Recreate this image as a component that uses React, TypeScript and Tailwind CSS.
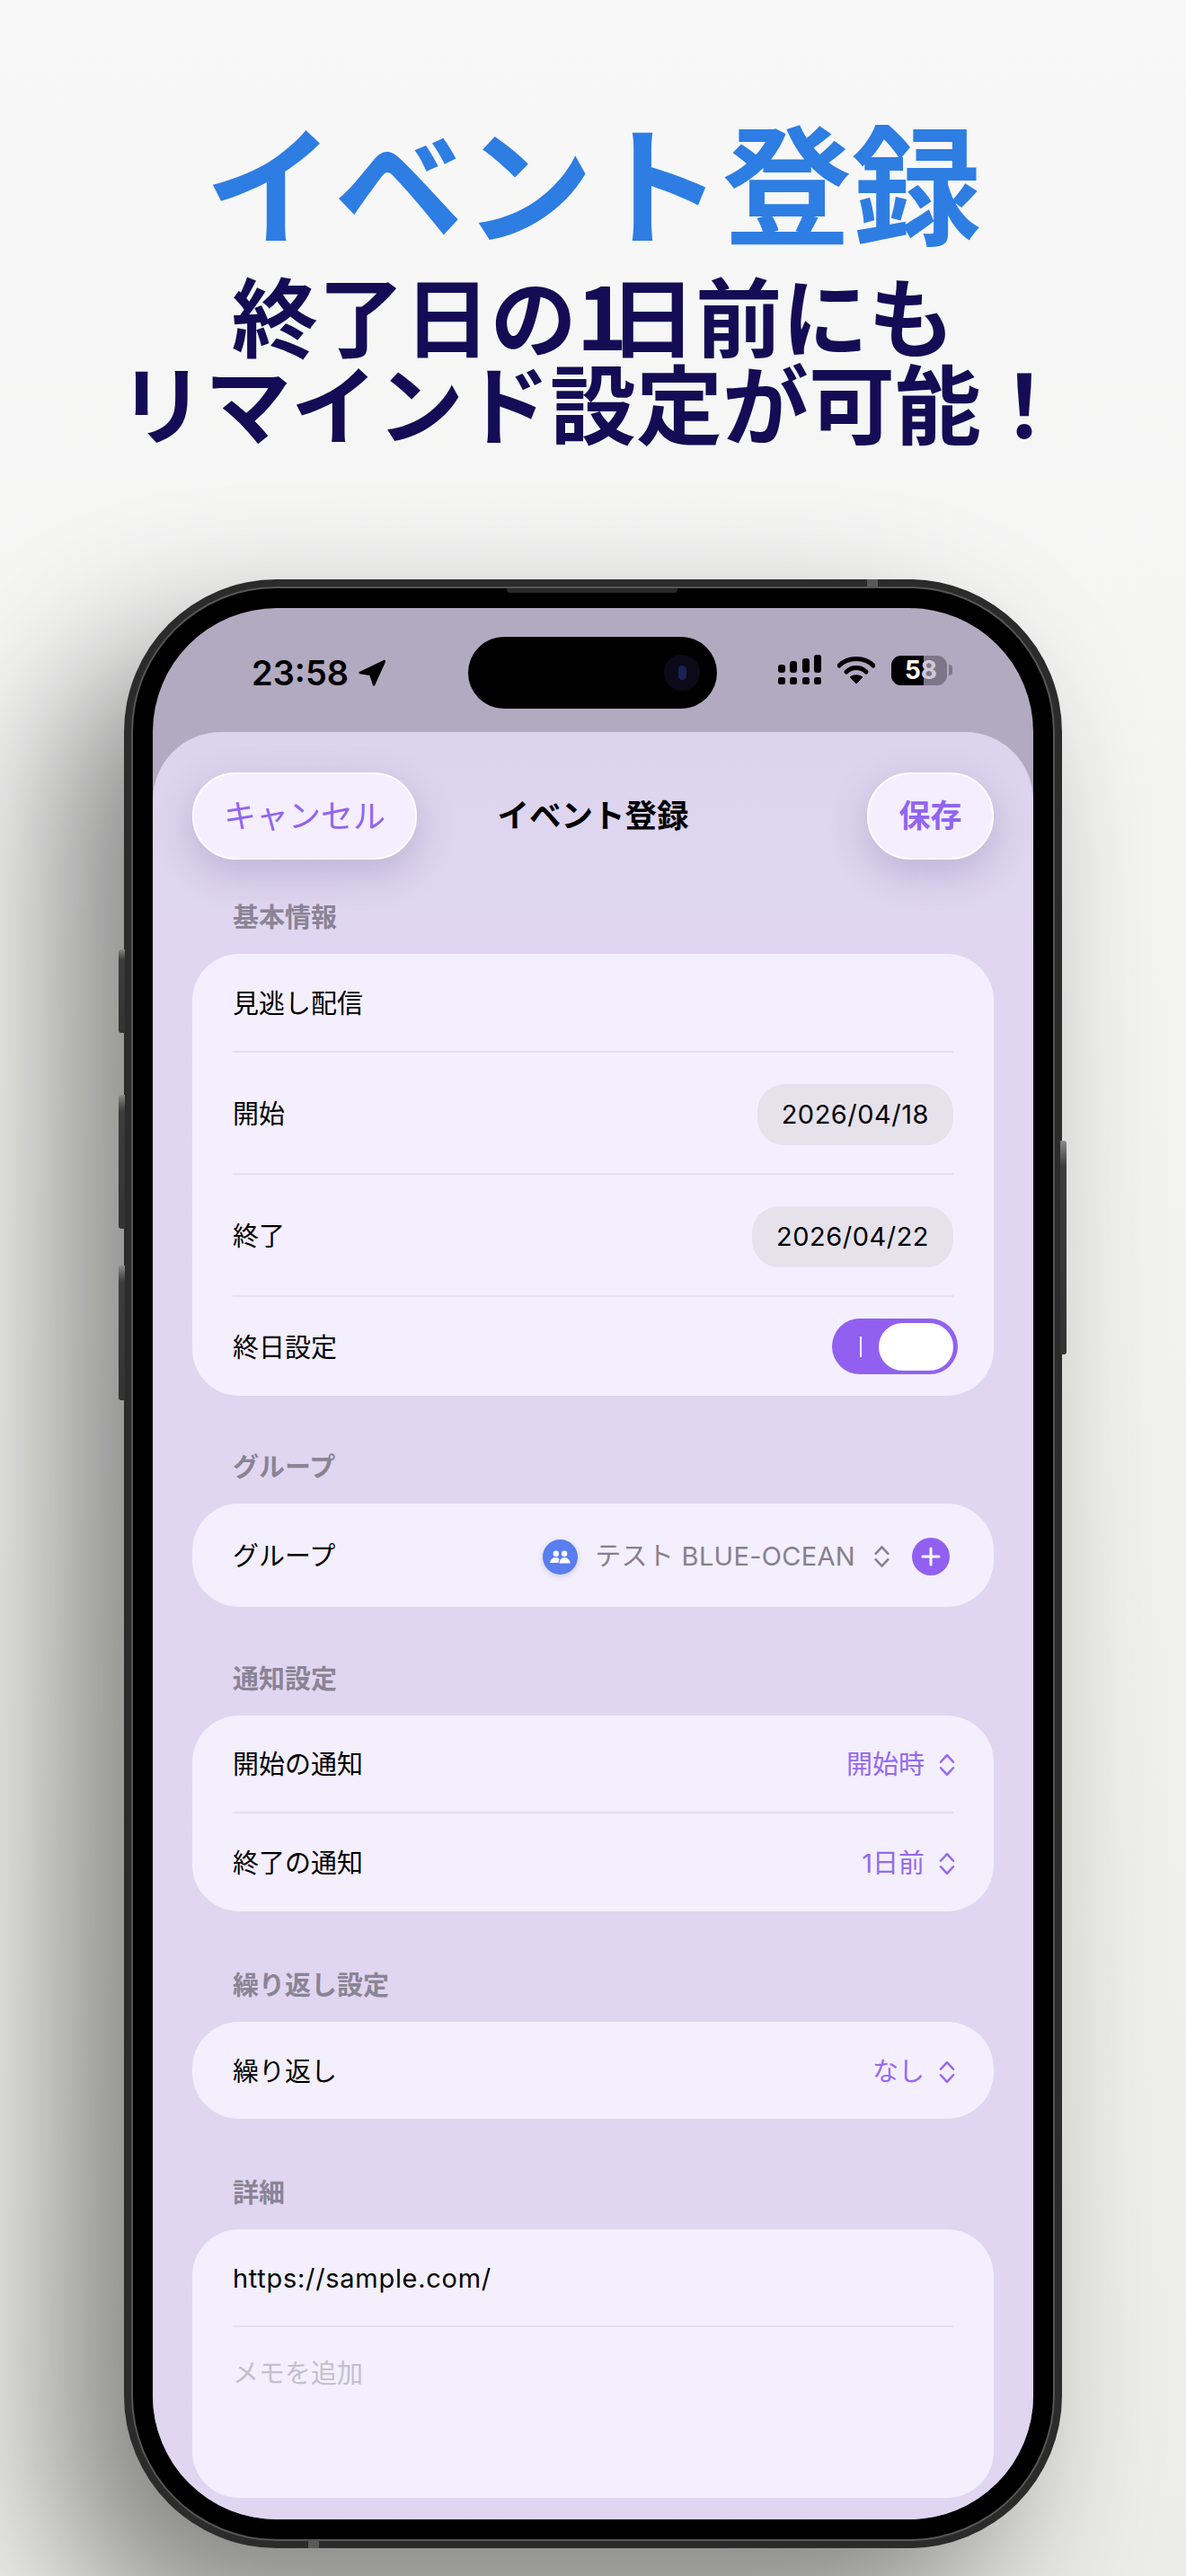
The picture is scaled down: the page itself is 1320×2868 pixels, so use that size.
import React from "react";

const font = "font-['Inter','Noto_Sans_CJK_JP',sans-serif]";

function Chevrons({ className }: { className: string }) {
  return (
    <svg viewBox="0 0 16 24" fill="none" stroke="currentColor" strokeWidth="2.3" strokeLinecap="round" strokeLinejoin="round" className={className}>
      <polyline points="1.500,9 8,2 14.500,9" />
      <polyline points="1.500,15 8,22 14.500,15" />
    </svg>
  );
}

function Label({ children }: { children: React.ReactNode }) {
  return <div className="h-10 mb-[22px] pl-[45px] pt-[3px] flex items-center text-[29px] font-bold text-[#8a8494]">{children}</div>;
}

function Divider() {
  return <div className="h-[2px] mx-[45px] bg-[#e4e0ec]" />;
}

function Row({ label, height, children }: { label: React.ReactNode; height: string; children?: React.ReactNode }) {
  return (
    <div className={`flex items-center justify-between px-[45px] pt-[3px] text-[29px] text-black ${height}`}>
      <span>{label}</span>
      {children}
    </div>
  );
}

function DatePill({ value }: { value: string }) {
  return <div className="h-[68px] px-[27px] flex items-center rounded-[30px] bg-[#e5e2ec] tracking-[0.5px]">{value}</div>;
}

function Picker({ value }: { value: string }) {
  return (
    <div className="flex items-center gap-[14px] -mr-[2px] text-[#9568f2]">
      <span className="mr-[2px]">{value}</span>
      <Chevrons className="w-[18px] h-[26px]" />
    </div>
  );
}

function StatusBar() {
  return (
    <div className="h-[138px] shrink-0 flex items-start justify-between pt-[52px] pl-[110px] pr-[90px] text-black">
      <div className="flex items-center gap-[10px] text-[38px] leading-10 font-semibold">
        23:58
        <svg viewBox="0 0 32 32" className="w-8 h-8" fill="currentColor">
          <path d="M29 2 2 15c-1 .6-.8 2 .4 2.2l11 1.8 3.6 11c.4 1.100 1.800 1.100 2.200 0L31 4c.5-1.300-.8-2.600-2-2Z" />
        </svg>
      </div>
      <div className="flex items-center gap-[18px]">
        <svg viewBox="0 0 48 34" className="w-12 h-[34px]" fill="currentColor">
          <rect x="0" y="25" width="8" height="8" rx="2.500" />
          <rect x="13" y="25" width="8" height="8" rx="2.500" />
          <rect x="27" y="25" width="8" height="8" rx="2.500" />
          <rect x="40" y="25" width="8" height="8" rx="2.500" />
          <rect x="0" y="11" width="8" height="9" rx="3" />
          <rect x="13" y="7" width="8" height="13" rx="3" />
          <rect x="27" y="4" width="8" height="16" rx="3" />
          <rect x="40" y="0" width="8" height="20" rx="3" />
        </svg>
        <svg viewBox="0 0 42 32" className="w-[42px] h-8">
          <path d="M2 11C12 1 30 1 40 11" fill="none" stroke="currentColor" strokeWidth="5" strokeLinecap="round" />
          <path d="M10 18c6-6 16-6 22 0" fill="none" stroke="currentColor" strokeWidth="5" strokeLinecap="round" />
          <path d="M21 31 14 24c4-3 10-3 14 0Z" fill="currentColor" stroke="currentColor" strokeLinejoin="round" />
        </svg>
        <div className="relative flex items-center">
          <div className="relative w-[62px] h-[33px] rounded-[11px] overflow-hidden bg-[#7d7689] flex">
            <div className="w-[36px] bg-black" />
            <div className="absolute inset-0 flex items-center justify-center pl-1 text-[28px] font-bold">
              <span className="text-white">5</span>
              <span className="text-[#cfcad8]">8</span>
            </div>
          </div>
          <div className="w-[4px] h-[12px] ml-[2px] rounded-r-full bg-[#7d7689]" />
        </div>
      </div>
    </div>
  );
}

function Sheet() {
  return (
    <div className={`flex-1 rounded-t-[76px] bg-gradient-to-b from-[#dcd4ee] to-[#e0d6f1] to-[12%] px-[44px] pt-[45px] ${font}`}>
      <div className="h-[97px] grid grid-cols-3 items-center">
        <div className="justify-self-start w-[250px] h-[97px] flex items-center justify-center rounded-[48px] bg-[#f5eefe] border-2 border-white text-[36px] text-[#9065f0] shadow-[0_14px_44px_rgba(70,50,110,0.22)]">
          キャンセル
        </div>
        <div className="justify-self-center text-[35.500px] font-semibold text-black whitespace-nowrap">イベント登録</div>
        <div className="justify-self-end w-[141px] h-[97px] flex items-center justify-center rounded-[48px] bg-[#f5eefe] border-2 border-white text-[35px] font-semibold text-[#9065f0] shadow-[0_14px_44px_rgba(70,50,110,0.22)]">
          保存
        </div>
      </div>

      <div className="mt-[43px]">
        <Label>基本情報</Label>
        <div className="rounded-[52px] bg-[#f4effe]">
          <Row label="見逃し配信" height="h-[108px]" />
          <Divider />
          <Row label="開始" height="h-[134px]">
            <DatePill value="2026/04/18" />
          </Row>
          <Divider />
          <Row label="終了" height="h-[134px]">
            <DatePill value="2026/04/22" />
          </Row>
          <Divider />
          <Row label="終日設定" height="h-[110px]">
            <div className="w-[140px] h-[62px] -mr-[5px] mb-[3px] p-[5px] pl-[31px] flex items-center justify-between rounded-full bg-[#9160f1]">
              <div className="w-[2px] h-[23px] bg-white" />
              <div className="w-[83px] h-[53px] rounded-full bg-white" />
            </div>
          </Row>
        </div>
      </div>

      <div className="mt-[58px]">
        <Label>グループ</Label>
        <Row label="グループ" height="h-[115px] rounded-[52px] bg-[#f3effd] !pr-[49px]">
          <div className="flex items-center text-[#85808e]">
            <div className="w-[39px] h-[39px] flex items-center justify-center rounded-full bg-[#5a7df0] shadow-[0_2px_6px_rgba(60,60,120,0.2)]">
              <svg viewBox="0 0 24 16" className="w-[23px] h-[15px]" fill="white">
                <circle cx="7" cy="4" r="3.400" />
                <circle cx="17" cy="4" r="3.400" />
                <path d="M0 15c0-3.500 3-6.500 6.500-6.500 2 0 3.600.8 4.700 2.200-.8 1-1.200 2.600-1.200 4.300Z" />
                <path d="M11 15.500c0-4 2.500-7 6-7s6.500 3 7 7Z" />
              </svg>
            </div>
            <span className="ml-[19px] tracking-[0.3px]">テスト BLUE-OCEAN</span>
            <Chevrons className="ml-[21px] w-[17px] h-[26px] text-[#85808e]" />
            <div className="ml-[25px] w-[42px] h-[42px] flex items-center justify-center rounded-full bg-[#9160f1]">
              <svg viewBox="0 0 22 22" className="w-[22px] h-[22px]" stroke="white" strokeWidth="3" strokeLinecap="round">
                <line x1="11" y1="2" x2="11" y2="20" />
                <line x1="2" y1="11" x2="20" y2="11" />
              </svg>
            </div>
          </div>
        </Row>
      </div>

      <div className="mt-[59px]">
        <Label>通知設定</Label>
        <div className="rounded-[52px] bg-[#f3effd]">
          <Row label="開始の通知" height="h-[107px]">
            <Picker value="開始時" />
          </Row>
          <Divider />
          <Row label="終了の通知" height="h-[109px]">
            <Picker value="1日前" />
          </Row>
        </div>
      </div>

      <div className="mt-[61px]">
        <Label>繰り返し設定</Label>
        <Row label="繰り返し" height="h-[108px] rounded-[52px] bg-[#f3effd]">
          <Picker value="なし" />
        </Row>
      </div>

      <div className="mt-[61px]">
        <Label>詳細</Label>
        <div className="h-[299px] rounded-[52px] bg-[#f3effd]">
          <Row label={<span className="tracking-[0.7px]">https://sample.com/</span>} height="h-[107px]" />
          <Divider />
          <div className="h-[104px] px-[45px] flex items-center text-[29px] text-[#c4bfcc]">メモを追加</div>
        </div>
      </div>
    </div>
  );
}

function SideButton({ className }: { className: string }) {
  return <div className={`absolute w-[7px] bg-gradient-to-b from-[#8a8a8a] via-[#3c3c3c] via-[12%] to-[#333333] ${className}`} />;
}

export default function App() {
  return (
    <div className="w-[1320px] h-[2868px] overflow-hidden flex flex-col items-center bg-gradient-to-b from-[#f8f8f8] to-[#ececea] font-['Noto_Sans_CJK_JP',sans-serif]">
      <h1 className="mt-[124px] text-[144px] leading-[150px] font-bold text-[#2d7de3]">イベント登録</h1>
      <div className="mt-[26px] text-center text-[96px] leading-[97px] font-bold text-[#150c55]">
        <div>
          終了日の<span className="tracking-[-20px]">1</span>日前にも
        </div>
        <div>リマインド設定が可能！</div>
      </div>

      <div className="relative mt-[151px] w-[1044px] h-[2192px] shrink-0 rounded-[170px] bg-[#2b2b2b] p-[10px] shadow-[-70px_80px_170px_rgba(0,0,0,0.45)]">
        <SideButton className="-left-[6px] top-[412px] h-[93px] rounded-l-[3px]" />
        <SideButton className="-left-[6px] top-[574px] h-[149px] rounded-l-[3px]" />
        <SideButton className="-left-[6px] top-[764px] h-[150px] rounded-l-[3px]" />
        <SideButton className="-right-[5px] top-[625px] h-[238px] rounded-r-[3px]" />
        <div className="absolute right-[205px] top-0 w-[12px] h-[12px] bg-[#5a5a5a]" />
        <div className="absolute left-[205px] bottom-0 w-[12px] h-[12px] bg-[#5a5a5a]" />

        <div className="relative h-full rounded-[160px] bg-black p-[22px] shadow-[0_0_0_2px_#565656]">
          <div className="absolute left-[416px] top-0 w-[190px] h-[5px] rounded-b-[4px] bg-[#2a2a2a]" />
          <div className="relative h-full flex flex-col overflow-hidden rounded-[138px] bg-[#b2aac0]">
            <div className="absolute left-[351px] top-[32px] w-[277px] h-[80px] rounded-[40px] bg-black flex items-center justify-end pr-[19px]">
              <div className="w-[40px] h-[40px] rounded-full bg-[#0c0a18] flex items-center justify-center">
                <div className="w-[9px] h-[16px] rounded-full bg-[#1a2258]" />
              </div>
            </div>
            <div className={font}>
              <StatusBar />
            </div>
            <Sheet />
          </div>
        </div>
      </div>
    </div>
  );
}
